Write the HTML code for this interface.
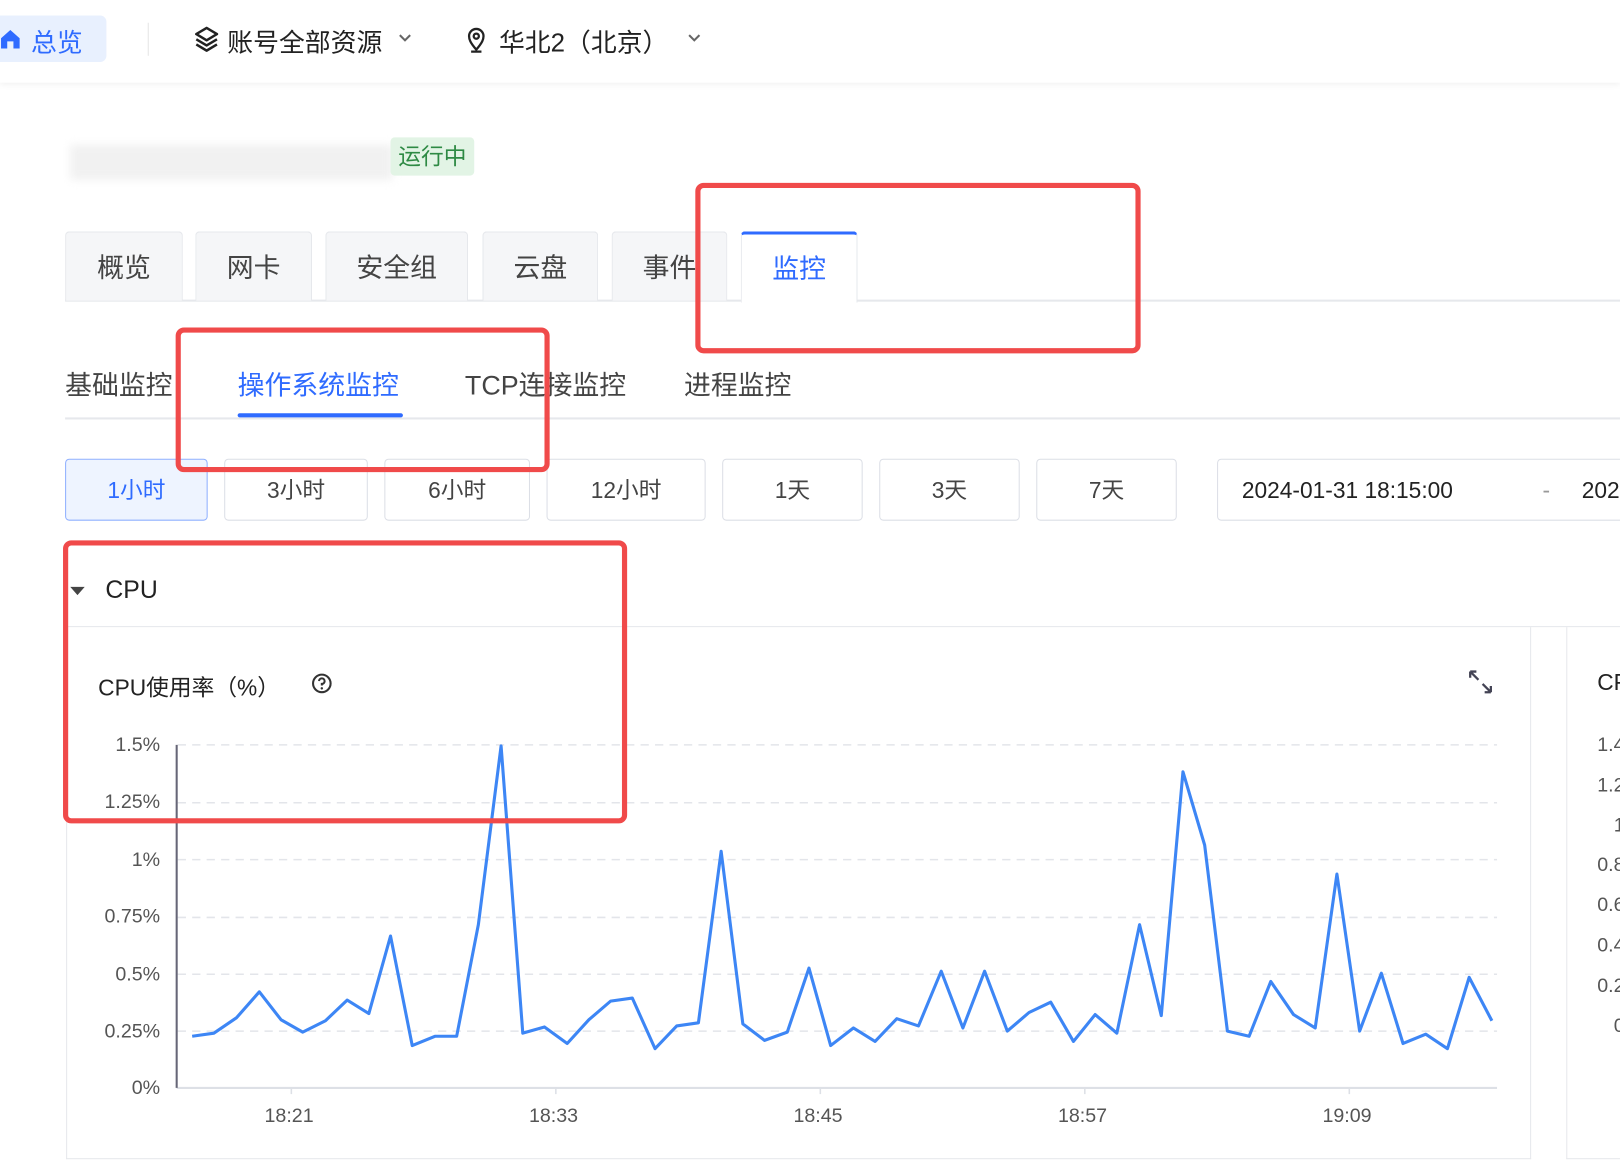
<!DOCTYPE html>
<html><head><meta charset="utf-8"><style>
html,body{margin:0;padding:0;width:1620px;height:1170px;overflow:hidden;background:#fff}
#w{position:absolute;left:0;top:0;width:1568px;height:1133px;overflow:hidden;transform:scale(1.03316);transform-origin:0 0;font-family:"Liberation Sans","Noto Sans CJK SC",sans-serif;color:#333}
.a{position:absolute;white-space:nowrap}
.tab{position:absolute;top:224px;height:67px;background:#f5f6f8;border:1px solid #e6e8ec;border-bottom:none;border-radius:4px 4px 0 0;box-sizing:border-box;font-size:26px;line-height:69px;text-align:center;color:#444}
.btn{position:absolute;top:444px;height:60px;border:1px solid #dcdfe6;border-radius:4px;box-sizing:border-box;font-size:22px;line-height:60px;text-align:center;color:#444;background:#fff;white-space:nowrap;overflow:hidden}
.red{position:absolute;border:5px solid #f04a4a;border-radius:8px;box-sizing:border-box}
.yl{position:absolute;right:1413px;font-size:19px;color:#555}
.yl2{position:absolute;left:1546px;font-size:19px;color:#555}
</style></head><body><div id="w">
<div class="a" style="left:0;top:0;width:1568px;height:80px;background:#fff;box-shadow:0 2px 6px rgba(0,0,0,.06)"></div>
<div class="a" style="left:-10px;top:15px;width:113px;height:45px;background:#e8f0fe;border-radius:6px"></div>
<svg class="a" style="left:0;top:28px" width="20" height="20" viewBox="0 0 20 20"><path d="M1 9 L10 1 L19 9 V19 H13 V12 H7 V19 H1Z" fill="#2f6bff"/></svg>
<div class="a" style="left:30px;top:22px;font-size:25px;color:#2f6bff">总览</div>
<div class="a" style="left:143px;top:22px;width:1px;height:32px;background:#e5e5e5"></div>
<svg class="a" style="left:187px;top:25px" width="26" height="26" viewBox="0 0 26 26" fill="none" stroke="#222" stroke-width="2.4" stroke-linejoin="round"><path d="M13 2 L23 8 L13 14 L3 8Z"/><path d="M3 13 L13 19 L23 13"/><path d="M3 18 L13 24 L23 18"/></svg>
<div class="a" style="left:220px;top:22px;font-size:25px;color:#222">账号全部资源</div>
<svg class="a" style="left:385px;top:32px" width="14" height="10"><path d="M2 2 L7 7 L12 2" fill="none" stroke="#666" stroke-width="2"/></svg>
<svg class="a" style="left:451px;top:26px" width="20" height="26" viewBox="0 0 20 26" fill="none" stroke="#222" stroke-width="2.2"><path d="M10 22 C4 15 3 12 3 9 A7 7 0 0 1 17 9 C17 12 16 15 10 22Z"/><circle cx="10" cy="9" r="2.5"/><path d="M5 24 H15"/></svg>
<div class="a" style="left:483px;top:22px;font-size:25px;color:#222">华北2（北京）</div>
<svg class="a" style="left:665px;top:32px" width="14" height="10"><path d="M2 2 L7 7 L12 2" fill="none" stroke="#666" stroke-width="2"/></svg>
<div class="a" style="left:68px;top:140px;width:312px;height:34px;background:#f1f1f1;filter:blur(4px)"></div>
<div class="a" style="left:378px;top:133px;width:81px;height:37px;background:#e2f4e5;border-radius:4px;font-size:22px;line-height:37px;text-align:center;color:#2e8a44">运行中</div>
<div class="a" style="left:63px;top:290px;width:1505px;height:2px;background:#e6e8ec"></div>
<div class="tab" style="left:63px;width:114px">概览</div>
<div class="tab" style="left:189px;width:113px">网卡</div>
<div class="tab" style="left:315px;width:138px">安全组</div>
<div class="tab" style="left:467px;width:112px">云盘</div>
<div class="tab" style="left:592px;width:112px">事件</div>
<div class="tab" style="left:717px;width:113px;background:#fff;border-top:3px solid #2f6bff;color:#2f6bff;height:69px;line-height:66px">监控</div>
<div class="a" style="left:63px;top:404px;width:1505px;height:2px;background:#e6e8ec"></div>
<div class="a" style="left:63px;top:353px;font-size:26px;color:#444">基础监控</div>
<div class="a" style="left:230px;top:353px;font-size:26px;color:#2f6bff">操作系统监控</div>
<div class="a" style="left:230px;top:400px;width:160px;height:4px;background:#2f6bff;border-radius:2px"></div>
<div class="a" style="left:450px;top:353px;font-size:26px;color:#444">TCP连接监控</div>
<div class="a" style="left:662px;top:353px;font-size:26px;color:#444">进程监控</div>
<div class="btn" style="left:63px;width:138px;background:#eef4ff;border-color:#8fb0ff;color:#2f6bff">1小时</div>
<div class="btn" style="left:217px;width:139px">3小时</div>
<div class="btn" style="left:372px;width:141px">6小时</div>
<div class="btn" style="left:529px;width:154px">12小时</div>
<div class="btn" style="left:699px;width:136px">1天</div>
<div class="btn" style="left:851px;width:136px">3天</div>
<div class="btn" style="left:1003px;width:136px">7天</div>
<div class="btn" style="left:1178px;width:420px;text-align:left;color:#222"><span style="position:absolute;left:23px">2024-01-31 18:15:00</span><span style="position:absolute;left:314px;color:#999">-</span><span style="position:absolute;left:352px">2024-01-31 19:15:00</span></div>
<svg class="a" style="left:67px;top:566px" width="16" height="12"><path d="M1 2 H15 L8 10Z" fill="#444"/></svg>
<div class="a" style="left:102px;top:558px;font-size:24px;color:#222">CPU</div>
<div class="a" style="left:63px;top:606px;width:1505px;height:1px;background:#e6e8ec"></div>
<div class="a" style="left:64px;top:607px;width:1418px;height:515px;border:1px solid #e6e8ec;border-top:none;box-sizing:border-box"></div>
<div class="a" style="left:1516px;top:607px;width:60px;height:515px;border:1px solid #e6e8ec;border-top:none;box-sizing:border-box"></div>
<div class="a" style="left:95px;top:648px;font-size:22px;color:#222">CPU使用率（%）</div>
<svg class="a" style="left:301px;top:651px" width="21" height="21" viewBox="0 0 21 21"><circle cx="10.5" cy="10.5" r="8.5" fill="none" stroke="#333" stroke-width="2"/><path d="M7.8 8.2 A2.7 2.7 0 1 1 10.5 11 V12.5" fill="none" stroke="#333" stroke-width="2"/><circle cx="10.5" cy="15.3" r="1.2" fill="#333"/></svg>
<svg class="a" style="left:1420px;top:647px" width="26" height="26" viewBox="0 0 26 26" fill="none" stroke="#445" stroke-width="2.2"><path d="M3 3 L11 11 M3 3 H9 M3 3 V9"/><path d="M23 23 L15 15 M23 23 H17 M23 23 V17"/></svg>
<div class="a" style="left:1546px;top:648px;font-size:22px;color:#222">CPU</div>
<div class="yl" style="top:711px">1.5%</div>
<div class="yl" style="top:766px">1.25%</div>
<div class="yl" style="top:822px">1%</div>
<div class="yl" style="top:877px">0.75%</div>
<div class="yl" style="top:933px">0.5%</div>
<div class="yl" style="top:988px">0.25%</div>
<div class="yl" style="top:1043px">0%</div>
<div class="yl2" style="top:711px">1.4</div>
<div class="yl2" style="top:750px">1.2</div>
<div class="yl2" style="top:789px;left:1562px">1</div>
<div class="yl2" style="top:827px">0.8</div>
<div class="yl2" style="top:866px">0.6</div>
<div class="yl2" style="top:905px">0.4</div>
<div class="yl2" style="top:944px">0.2</div>
<div class="yl2" style="top:983px;left:1562px">0</div>
<div class="a" style="left:256px;top:1070px;font-size:19px;color:#555">18:21</div>
<div class="a" style="left:512px;top:1070px;font-size:19px;color:#555">18:33</div>
<div class="a" style="left:768px;top:1070px;font-size:19px;color:#555">18:45</div>
<div class="a" style="left:1024px;top:1070px;font-size:19px;color:#555">18:57</div>
<div class="a" style="left:1280px;top:1070px;font-size:19px;color:#555">19:09</div>
<svg class="a" style="left:0;top:0" width="1568" height="1133">
<g stroke="#e3e5ea" stroke-width="1.5" stroke-dasharray="8 6">
<line x1="172" y1="721" x2="1449" y2="721"/><line x1="172" y1="777" x2="1449" y2="777"/><line x1="172" y1="832" x2="1449" y2="832"/><line x1="172" y1="888" x2="1449" y2="888"/><line x1="172" y1="943" x2="1449" y2="943"/><line x1="172" y1="998" x2="1449" y2="998"/></g>
<line x1="171" y1="1053" x2="1449" y2="1053" stroke="#dde0e6" stroke-width="2"/>
<line x1="171" y1="721" x2="171" y2="1053" stroke="#667" stroke-width="2"/>
<g stroke="#dde0e6" stroke-width="1.5"><line x1="282" y1="1053" x2="282" y2="1059"/><line x1="538" y1="1053" x2="538" y2="1059"/><line x1="794" y1="1053" x2="794" y2="1059"/><line x1="1050" y1="1053" x2="1050" y2="1059"/><line x1="1306" y1="1053" x2="1306" y2="1059"/></g>
<polyline fill="none" stroke="#3d86f5" stroke-width="3" stroke-linejoin="round" points="186,1003 207,1000 229,985 251,960 272,987 293,999 315,988 336,968 357,981 378,906 399,1012 421,1003 442,1003 463,895 485,722 506,1000 527,994 549,1010 570,987 591,969 612,966 634,1015 655,993 676,990 698,824 719,991 740,1007 762,999 783,937 804,1012 826,995 847,1008 868,986 889,993 911,940 932,995 953,940 975,998 996,980 1017,970 1039,1008 1060,982 1081,1000 1103,895 1124,983 1145,747 1166,818 1188,998 1209,1003 1230,950 1252,982 1273,995 1294,846 1316,998 1337,942 1358,1010 1380,1001 1401,1015 1422,946 1444,988"/>
</svg>
<div class="red" style="left:673px;top:177px;width:431px;height:165px"></div>
<div class="red" style="left:170px;top:317px;width:362px;height:140px"></div>
<div class="red" style="left:61px;top:523px;width:546px;height:274px"></div>
</div></body></html>
